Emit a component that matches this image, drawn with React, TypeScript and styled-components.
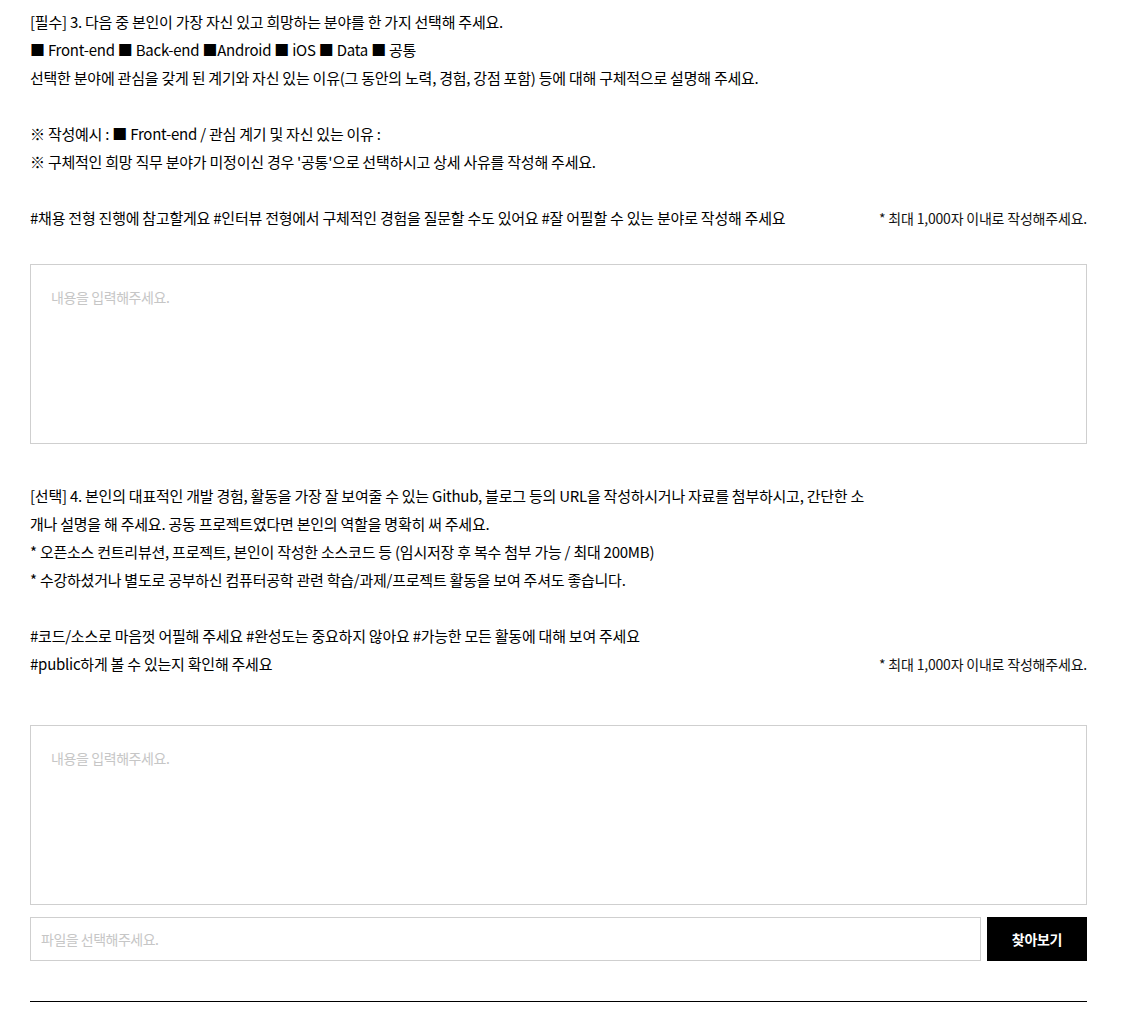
import React from "react";
import styled, { createGlobalStyle } from "styled-components";

const Global = createGlobalStyle`
  html, body { margin: 0; padding: 0; background: #fff; }
  body {
    font-family: "Noto Sans CJK KR", "Noto Sans", sans-serif;
    color: #000;
    -webkit-font-smoothing: antialiased;
  }
`;

const Page = styled.div`
  width: 1057px;
  margin-left: 30px;
  padding-top: 8px;
`;

const Question = styled.div<{ $gap: number }>`
  display: flex;
  justify-content: space-between;
  align-items: flex-end;
  margin-bottom: ${(p) => p.$gap}px;
`;

const QuestionText = styled.div`
  font-size: 15px;
  line-height: 28px;
  letter-spacing: -0.24px;
  color: #000;
  white-space: nowrap;
`;

const Line = styled.p`
  margin: 0;
  min-height: 28px;
`;

const Note = styled.span`
  font-size: 14px;
  line-height: 28px;
  letter-spacing: -0.2px;
  color: #111;
`;

const TextArea = styled.textarea`
  display: block;
  box-sizing: border-box;
  width: 100%;
  height: 180px;
  border: 1px solid #cfcfcf;
  padding: 22px 20px;
  resize: none;
  font-family: inherit;
  font-size: 14px;
  line-height: 20px;
  letter-spacing: -0.4px;
  color: #111;
  outline: none;
  &::placeholder { color: #c6c6c6; }
`;

const Section = styled.section<{ $top: number }>`
  margin-top: ${(p) => p.$top}px;
`;

const FileRow = styled.div`
  display: flex;
  gap: 6px;
  margin-top: 12px;
  height: 44px;
`;

const FileInput = styled.input`
  flex: 1;
  box-sizing: border-box;
  height: 44px;
  border: 1px solid #cfcfcf;
  padding: 0 10px;
  font-family: inherit;
  font-size: 14px;
  letter-spacing: -0.5px;
  outline: none;
  &::placeholder { color: #c6c6c6; }
`;

const FindButton = styled.button`
  width: 100px;
  height: 44px;
  border: none;
  background: #000;
  color: #fff;
  font-family: inherit;
  font-size: 14px;
  font-weight: 700;
  letter-spacing: -0.3px;
  cursor: pointer;
`;

const Divider = styled.hr`
  margin: 40px 0 0;
  border: none;
  border-top: 1px solid #000;
`;

export default function App() {
  return (
    <>
      <Global />
      <Page>
        <Question $gap={32}>
          <QuestionText>
            <Line>[필수] 3. 다음 중 본인이 가장 자신 있고 희망하는 분야를 한 가지 선택해 주세요.</Line>
            <Line>■ Front-end ■ Back-end ■Android ■ iOS ■ Data ■ 공통</Line>
            <Line>선택한 분야에 관심을 갖게 된 계기와 자신 있는 이유(그 동안의 노력, 경험, 강점 포함) 등에 대해 구체적으로 설명해 주세요.</Line>
            <Line />
            <Line>※ 작성예시 : ■ Front-end / 관심 계기 및 자신 있는 이유 :</Line>
            <Line>※ 구체적인 희망 직무 분야가 미정이신 경우 '공통'으로 선택하시고 상세 사유를 작성해 주세요.</Line>
            <Line />
            <Line>#채용 전형 진행에 참고할게요 #인터뷰 전형에서 구체적인 경험을 질문할 수도 있어요 #잘 어필할 수 있는 분야로 작성해 주세요</Line>
          </QuestionText>
          <Note>* 최대 1,000자 이내로 작성해주세요.</Note>
        </Question>
        <TextArea placeholder="내용을 입력해주세요." />

        <Section $top={38}>
          <Question $gap={47}>
            <QuestionText>
              <Line>[선택] 4. 본인의 대표적인 개발 경험, 활동을 가장 잘 보여줄 수 있는 Github, 블로그 등의 URL을 작성하시거나 자료를 첨부하시고, 간단한 소</Line>
              <Line>개나 설명을 해 주세요. 공동 프로젝트였다면 본인의 역할을 명확히 써 주세요.</Line>
              <Line>* 오픈소스 컨트리뷰션, 프로젝트, 본인이 작성한 소스코드 등 (임시저장 후 복수 첨부 가능 / 최대 200MB)</Line>
              <Line>* 수강하셨거나 별도로 공부하신 컴퓨터공학 관련 학습/과제/프로젝트 활동을 보여 주셔도 좋습니다.</Line>
              <Line />
              <Line>#코드/소스로 마음껏 어필해 주세요 #완성도는 중요하지 않아요 #가능한 모든 활동에 대해 보여 주세요</Line>
              <Line>#public하게 볼 수 있는지 확인해 주세요</Line>
            </QuestionText>
            <Note>* 최대 1,000자 이내로 작성해주세요.</Note>
          </Question>
          <TextArea placeholder="내용을 입력해주세요." />
          <FileRow>
            <FileInput readOnly placeholder="파일을 선택해주세요." />
            <FindButton type="button">찾아보기</FindButton>
          </FileRow>
        </Section>
        <Divider />
      </Page>
    </>
  );
}
